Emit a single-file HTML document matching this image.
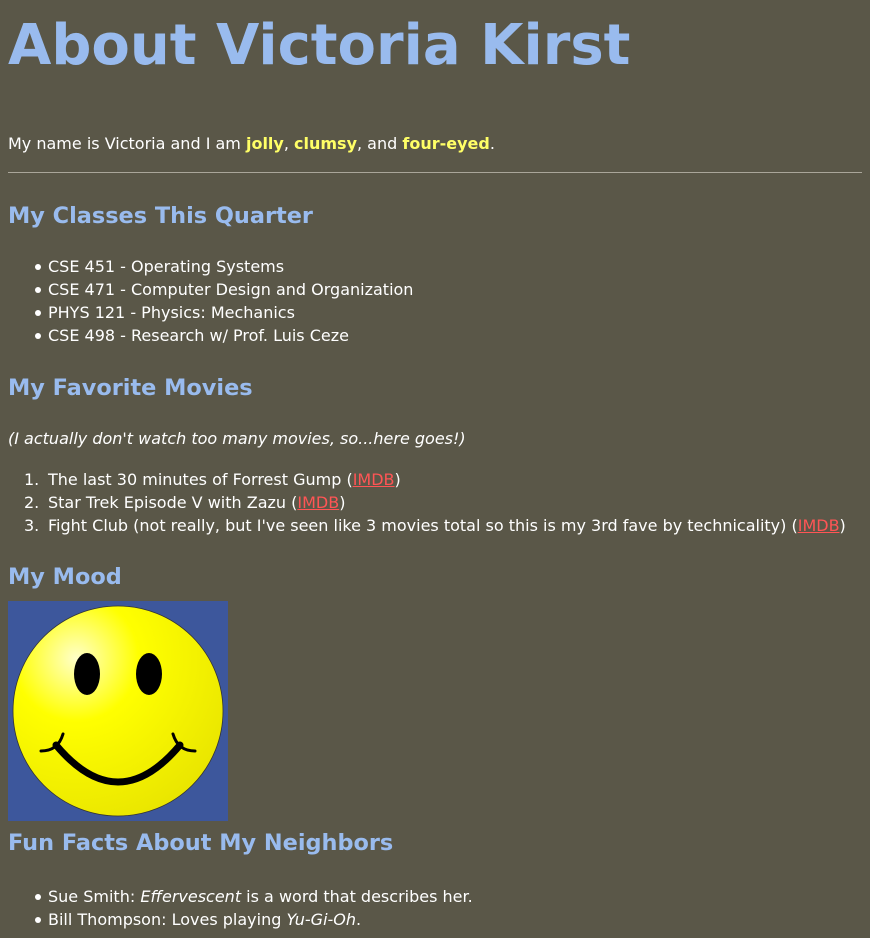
<!DOCTYPE html>
<html><head><meta charset="utf-8"><style>
body{margin:0;width:870px;height:938px;background:#5a5748;color:#fff;font-family:"DejaVu Sans","Liberation Sans",sans-serif;font-size:16px;overflow:hidden;position:relative}
.a{position:absolute;left:8px;white-space:nowrap;line-height:1}
h1,h2{margin:0;font-weight:bold;color:#99bbee}
h1{font-size:56px}
h2{font-size:22.4px}
.y{color:#ffff66;font-weight:bold}
a{color:#ff5555;text-decoration:underline}
.li{left:48px}
.b{position:absolute;left:35px;width:6px;height:6px;border-radius:50%;background:#fff}
.n{position:absolute;left:24px;line-height:1}
</style></head><body>
<h1 class="a" style="top:18px">About Victoria Kirst</h1>
<div class="a" style="top:136px">My name is Victoria and I am <span class="y">jolly</span>, <span class="y">clumsy</span>, and <span class="y">four-eyed</span>.</div>
<div style="position:absolute;left:8px;right:8px;top:172px;height:1px;background:#aaa69a"></div>
<h2 class="a" style="top:205px">My Classes This Quarter</h2>
<div class="b" style="top:264px"></div><div class="a li" style="top:259px">CSE 451 - Operating Systems</div>
<div class="b" style="top:287px"></div><div class="a li" style="top:282px">CSE 471 - Computer Design and Organization</div>
<div class="b" style="top:310px"></div><div class="a li" style="top:305px">PHYS 121 - Physics: Mechanics</div>
<div class="b" style="top:333px"></div><div class="a li" style="top:328px">CSE 498 - Research w/ Prof. Luis Ceze</div>
<h2 class="a" style="top:377px">My Favorite Movies</h2>
<div class="a" style="top:431px;font-style:italic">(I actually don't watch too many movies, so...here goes!)</div>
<div class="n" style="top:472px">1.</div><div class="a li" style="top:472px">The last 30 minutes of Forrest Gump (<a>IMDB</a>)</div>
<div class="n" style="top:495px">2.</div><div class="a li" style="top:495px">Star Trek Episode V with Zazu (<a>IMDB</a>)</div>
<div class="n" style="top:518px">3.</div><div class="a li" style="top:518px">Fight Club (not really, but I've seen like 3 movies total so this is my 3rd fave by technicality) (<a>IMDB</a>)</div>
<h2 class="a" style="top:566px">My Mood</h2>
<svg style="position:absolute;left:8px;top:601px" width="220" height="220" viewBox="0 0 220 220">
<defs><radialGradient id="g" cx="0.3" cy="0.25" r="0.85"><stop offset="0" stop-color="#ffffc8"/><stop offset="0.35" stop-color="#ffff00"/><stop offset="1" stop-color="#e8e400"/></radialGradient></defs>
<rect width="220" height="220" fill="#3d579c"/>
<circle cx="110" cy="110" r="105" fill="url(#g)" stroke="#333" stroke-width="0.8"/>
<ellipse cx="79" cy="73" rx="13" ry="21" fill="#000"/>
<ellipse cx="141" cy="73" rx="13" ry="21" fill="#000"/>
<path d="M48 144 Q110 218 172 144" fill="none" stroke="#000" stroke-width="7" stroke-linecap="round"/>
<path d="M33 150 Q50 150 55 133" fill="none" stroke="#000" stroke-width="3" stroke-linecap="round"/>
<path d="M187 150 Q170 150 165 133" fill="none" stroke="#000" stroke-width="3" stroke-linecap="round"/>
</svg>
<h2 class="a" style="top:832px">Fun Facts About My Neighbors</h2>
<div class="b" style="top:894px"></div><div class="a li" style="top:889px">Sue Smith: <i>Effervescent</i> is a word that describes her.</div>
<div class="b" style="top:917px"></div><div class="a li" style="top:912px">Bill Thompson: Loves playing <i>Yu-Gi-Oh</i>.</div>
</body></html>
